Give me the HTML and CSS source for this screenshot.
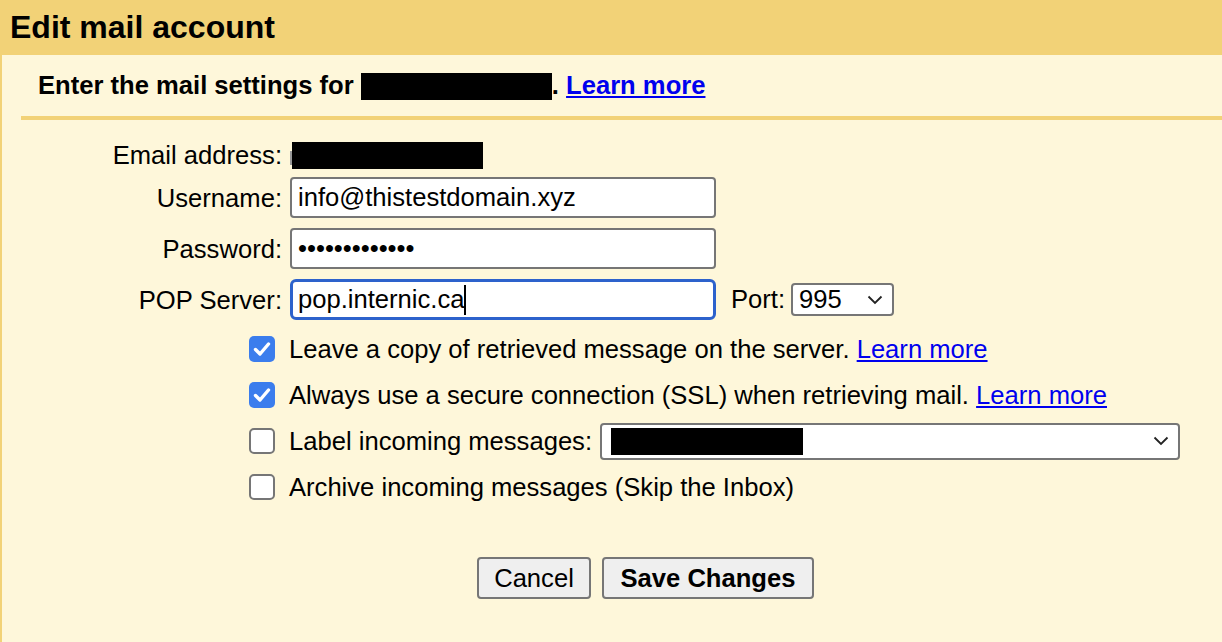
FILE: index.html
```html
<!DOCTYPE html>
<html lang="en">
<head>
<meta charset="utf-8">
<title>Edit mail account</title>
<link rel="stylesheet" href="styles.css">
</head>
<body>
<header class="header">Edit mail account</header>
<main class="main">
  <div class="intro">Enter the mail settings for <span class="redact redact-intro"></span>. <a href="#" class="link">Learn more</a></div>
  <div class="divider"></div>
  <div class="form-grid">
    <div class="label label-email">Email address:</div>
    <div class="value value-email"><span class="sliver"></span><span class="redact redact-email"></span></div>

    <div class="label">Username:</div>
    <div class="value"><div class="field" role="textbox">info@thistestdomain.xyz</div></div>

    <div class="label">Password:</div>
    <div class="value"><div class="field field-pass" role="textbox">•••••••••••••</div></div>

    <div class="label">POP Server:</div>
    <div class="value pop-row">
      <div class="field field-focus" role="textbox">pop.internic.ca<span class="caret"></span></div>
      <span class="port-label">Port:</span>
      <div class="select select-port" role="combobox">
        <span>995</span>
        <svg class="chev" width="16" height="10" viewBox="0 0 16 10"><path d="M1.5 1.5 L8 8 L14.5 1.5" fill="none" stroke="#222" stroke-width="1.8"/></svg>
      </div>
    </div>
  </div>

  <div class="checks">
    <div class="check-row">
      <span class="cb cb-on"><svg width="26" height="26" viewBox="0 0 26 26"><path d="M6.5 13.5 L11 18 L19.5 8" fill="none" stroke="#fff" stroke-width="3.4" stroke-linecap="round" stroke-linejoin="round"/></svg></span>
      <span class="check-text">Leave a copy of retrieved message on the server. <a href="#" class="link">Learn more</a></span>
    </div>
    <div class="check-row">
      <span class="cb cb-on"><svg width="26" height="26" viewBox="0 0 26 26"><path d="M6.5 13.5 L11 18 L19.5 8" fill="none" stroke="#fff" stroke-width="3.4" stroke-linecap="round" stroke-linejoin="round"/></svg></span>
      <span class="check-text">Always use a secure connection (SSL) when retrieving mail. <a href="#" class="link">Learn more</a></span>
    </div>
    <div class="check-row">
      <span class="cb"></span>
      <span class="check-text">Label incoming messages:</span>
      <div class="select select-label" role="combobox">
        <span class="redact redact-label"></span>
        <svg class="chev" width="16" height="10" viewBox="0 0 16 10"><path d="M1.5 1.5 L8 8 L14.5 1.5" fill="none" stroke="#222" stroke-width="1.8"/></svg>
      </div>
    </div>
    <div class="check-row">
      <span class="cb"></span>
      <span class="check-text">Archive incoming messages (Skip the Inbox)</span>
    </div>
  </div>

  <div class="buttons">
    <button class="btn btn-cancel">Cancel</button>
    <button class="btn btn-bold">Save Changes</button>
  </div>
</main>
</body>
</html>
```

FILE: styles.css
```css
html, body {
  margin: 0;
  padding: 0;
}
body {
  background: #fef7da;
  border-left: 2px solid #f2d277;
  min-height: 642px;
  box-sizing: border-box;
  font-family: "Liberation Sans", Arial, sans-serif;
  font-size: 25.6px;
  color: #000;
}
.header {
  background: #f2d277;
  height: 55px;
  line-height: 55px;
  margin-left: -2px;
  padding-left: 10px;
  font-size: 32px;
  font-weight: bold;
}
.intro {
  height: 61px;
  line-height: 61px;
  padding-left: 36px;
  font-weight: bold;
  display: flex;
  align-items: center;
  white-space: pre;
}
.redact {
  display: inline-block;
  background: #000;
}
.redact-intro {
  width: 191px;
  height: 27px;
  margin-top: 2px;
}
.link {
  color: #0000ee;
  text-decoration: underline;
}
.divider {
  height: 4px;
  background: #f2d277;
  margin-left: 19px;
}
.form-grid {
  display: grid;
  grid-template-columns: 280px auto;
  column-gap: 8px;
  row-gap: 10px;
  padding-top: 20px;
}
.label {
  text-align: right;
  align-self: center;
  line-height: 30px;
}
.label-email {
  line-height: 27px;
}
.label-email,
.value-email {
  margin-top: 2px;
  margin-bottom: -2px;
}
.value {
  display: flex;
  align-items: center;
}
.sliver {
  display: inline-block;
  width: 2px;
  height: 14px;
  background: #999;
  margin-top: 4px;
}
.redact-email {
  width: 191px;
  height: 27px;
}
.field {
  box-sizing: border-box;
  width: 426px;
  height: 41px;
  background: #fff;
  border: 2px solid #767676;
  border-radius: 4px;
  padding: 0 6px;
  line-height: 37px;
  white-space: nowrap;
  display: flex;
  align-items: center;
}
.field-focus {
  border: 3px solid #2d62cc;
  border-radius: 6px;
  padding: 0 5px;
}
.caret {
  display: inline-block;
  width: 2px;
  height: 30px;
  background: #000;
}
.port-label {
  margin-left: 15px;
  margin-right: 6px;
}
.select {
  box-sizing: border-box;
  background: #fff;
  border: 2px solid #767676;
  border-radius: 4px;
  display: flex;
  align-items: center;
  justify-content: space-between;
}
.select-port {
  width: 103px;
  height: 33px;
  padding: 0 9px 0 6px;
}
.chev {
  display: block;
}
.checks {
  padding-left: 247px;
  margin-top: 6px;
}
.check-row {
  height: 46px;
  display: flex;
  align-items: center;
}
.cb {
  box-sizing: border-box;
  width: 26px;
  height: 26px;
  border-radius: 5px;
  border: 2px solid #767676;
  background: #fff;
  margin-right: 14px;
  flex: none;
}
.cb-on {
  border: none;
  background: #3b7ded;
}
.cb svg {
  display: block;
}
.check-text {
  white-space: pre;
}
.select-label {
  width: 580px;
  height: 37px;
  margin-left: 8px;
  padding: 0 9px 0 9px;
}
.redact-label {
  width: 192px;
  height: 27px;
}
.buttons {
  display: flex;
  gap: 11px;
  padding-left: 475px;
  margin-top: 47px;
}
.btn {
  box-sizing: border-box;
  height: 42px;
  padding: 0;
  background: #efefef;
  border: 2px solid #767676;
  border-radius: 4px;
  font-family: "Liberation Sans", Arial, sans-serif;
  font-size: 25.6px;
  color: #000;
  white-space: nowrap;
  text-align: center;
}
.btn-cancel {
  width: 114px;
}
.btn-bold {
  font-weight: bold;
  width: 212px;
}
```
